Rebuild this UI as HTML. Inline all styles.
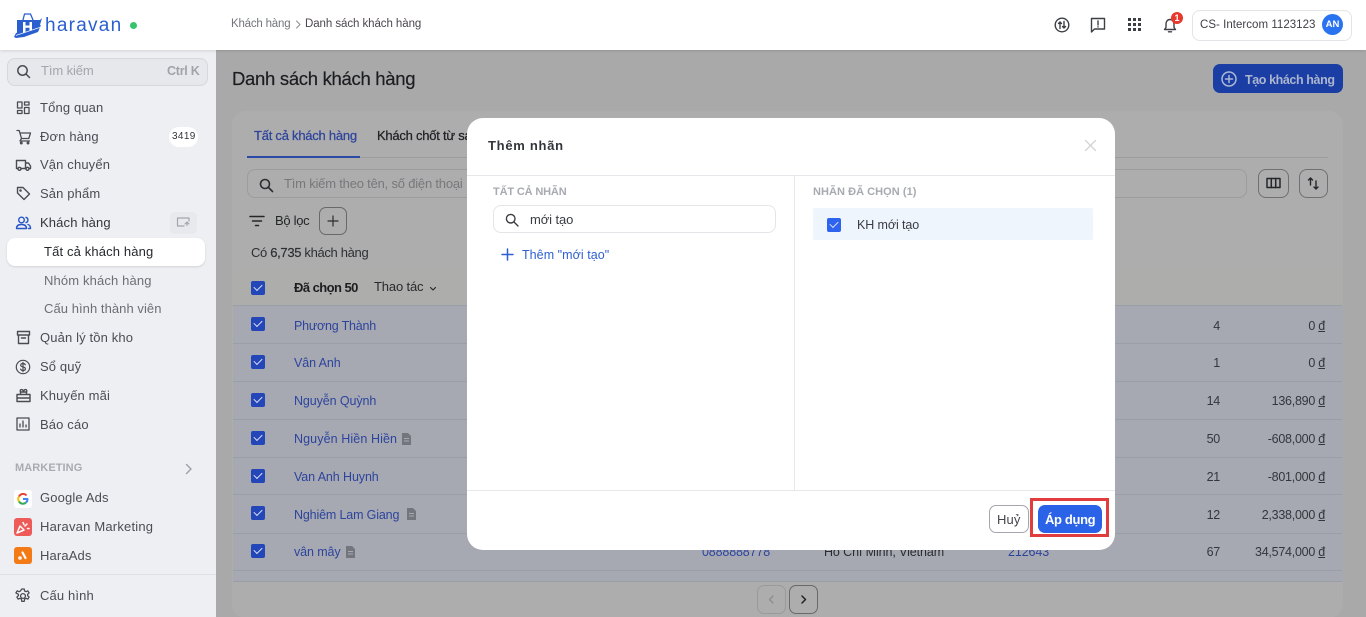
<!DOCTYPE html>
<html lang="vi"><head><meta charset="utf-8"><title>Danh sách khách hàng</title>
<style>
*{box-sizing:border-box}
html,body{margin:0;padding:0;width:1366px;height:617px;overflow:hidden;background:#fff}
body{position:relative;font-family:"Liberation Sans",sans-serif;font-size:13px;color:#3c4048}
.a,.t{position:absolute}
.t{white-space:nowrap;line-height:18px;letter-spacing:.14px}
svg{position:absolute;fill:none;stroke:currentColor;stroke-width:1.5;stroke-linecap:round;stroke-linejoin:round}
.cb{position:absolute;left:251px;width:14px;height:14px;background:#2346b8;border-radius:2px}
.cb:after{content:"";position:absolute;left:3px;top:2.6px;width:7px;height:4px;border-left:1.6px solid #d8dcec;border-bottom:1.6px solid #d8dcec;transform:rotate(-45deg)}
.n{color:#2d449c;font-size:12.5px;letter-spacing:-.1px}
.l{position:absolute;left:233px;width:1109px;height:1px;background:#9a9ea6}
.s{color:#4a4d55}
.num{color:#33363c;text-align:right;font-size:12.5px;letter-spacing:-.25px}
</style></head><body>

<!-- content area -->
<div class="a" style="left:216px;top:50px;width:1150px;height:567px;background:#a9a9aa"></div>
<div class="a" style="left:232px;top:111px;width:1111px;height:507px;background:#adadad;border-radius:14px"></div>
<div class="t" style="left:232px;top:67px;font-size:18.5px;line-height:24px;color:#1c1d20;letter-spacing:-.3px;-webkit-text-stroke:.2px #1c1d20">Danh sách khách hàng</div>

<div class="a" style="left:1213px;top:64px;width:130px;height:29px;background:#1a3ea3;border-radius:7px"></div>
<svg style="left:1221px;top:71px;color:#adb8d6" width="16" height="16" viewBox="0 0 16 16"><circle cx="8" cy="8" r="7"/><path d="M8 4.5v7M4.500 8h7"/></svg>
<div class="t" style="left:1245px;top:71px;color:#adb6cf;font-size:12.5px;font-weight:700;letter-spacing:-.4px">Tạo khách hàng</div>

<div class="t" style="left:254px;top:127px;color:#2d449c;letter-spacing:-.24px;-webkit-text-stroke:.25px #2d449c">Tất cả khách hàng</div>
<div class="t" style="left:377px;top:127px;color:#1f2024;letter-spacing:-.24px;-webkit-text-stroke:.25px #1f2024">Khách chốt từ sa</div>
<div class="a" style="left:247px;top:157px;width:1081px;height:1px;background:#9c9c9d"></div>
<div class="a" style="left:247px;top:156px;width:113px;height:2px;background:#2a4aa6"></div>

<div class="a" style="left:247px;top:169px;width:1000px;height:29px;border:1px solid #9c9c9e;border-radius:8px"></div>
<svg style="left:259px;top:178px;color:#2c2d30;stroke-width:1.6" width="15" height="15" viewBox="0 0 15 15"><circle cx="6" cy="6" r="4.5"/><path d="M9.5 9.500l4 4"/></svg>
<div class="t" style="left:284px;top:175px;color:#77787b;letter-spacing:-.2px">Tìm kiếm theo tên, số điện thoại</div>
<div class="a" style="left:1258px;top:169px;width:31px;height:29px;border:1px solid #6f7072;border-radius:8px"></div>
<svg style="left:1266px;top:176px;color:#25262a;stroke-width:1.5" width="15" height="14" viewBox="0 0 15 14"><rect x="1" y="2.500" width="13" height="9"/><path d="M5.300 2.500v9M9.700 2.500v9"/></svg>
<div class="a" style="left:1299px;top:169px;width:29px;height:29px;border:1px solid #6f7072;border-radius:8px"></div>
<svg style="left:1306px;top:176px;color:#25262a;stroke-width:1.4" width="15" height="15" viewBox="0 0 15 15"><path d="M4.500 9V2M2.500 4l2-2 2 2M10 5v8M8 11l2 2 2-2"/></svg>

<svg style="left:249px;top:214px;color:#25262a;stroke-width:1.5" width="16" height="14" viewBox="0 0 16 14"><path d="M1 2.500h14M3.500 7h9M6.500 11.500h3"/></svg>
<div class="t" style="left:275px;top:212px;color:#232427;letter-spacing:-.3px">Bộ lọc</div>
<div class="a" style="left:319px;top:207px;width:28px;height:28px;border:1px solid #68696c;border-radius:7px"></div>
<svg style="left:327px;top:215px;color:#2c2d30;stroke-width:1.200" width="12" height="12" viewBox="0 0 12 12"><path d="M6 1v10M1 6h10"/></svg>
<div class="t" style="left:251px;top:244px;color:#2e2f33;letter-spacing:-.33px">Có <span style="-webkit-text-stroke:.2px">6,735</span> khách hàng</div>

<!-- table -->
<div class="a" style="left:233px;top:269px;width:1110px;height:37px;background:#adadab"></div>
<div class="a" style="left:233px;top:306px;width:1110px;height:276px;background:#a6a9b2"></div>
<div class="l" style="top:305px"></div><div class="l" style="top:343px"></div><div class="l" style="top:381px"></div><div class="l" style="top:419px"></div><div class="l" style="top:457px"></div><div class="l" style="top:494px"></div><div class="l" style="top:533px"></div><div class="l" style="top:570px"></div><div class="l" style="top:581px"></div>

<div class="cb" style="top:281px"></div>
<div class="t" style="left:294px;top:279px;color:#1c1d20;font-weight:700;letter-spacing:-.55px">Đã chọn 50</div>
<div class="t" style="left:374px;top:278px;color:#292a2e;letter-spacing:-.15px">Thao tác</div>
<svg style="left:429px;top:286px;color:#292a2e;stroke-width:1.2" width="8" height="6" viewBox="0 0 8 6"><path d="M1.500 1.500L4 4l2.500-2.500"/></svg>

<div class="cb" style="top:317px"></div><div class="t n" style="left:294px;top:317px;letter-spacing:-.2px">Phương Thành</div>
<div class="cb" style="top:355px"></div><div class="t n" style="left:294px;top:354px">Vân Anh</div>
<div class="cb" style="top:393px"></div><div class="t n" style="left:294px;top:392px">Nguyễn Quỳnh</div>
<div class="cb" style="top:431px"></div><div class="t n" style="left:294px;top:430px;letter-spacing:.1px">Nguyễn Hiền Hiền</div>
<div class="cb" style="top:469px"></div><div class="t n" style="left:294px;top:468px">Van Anh Huynh</div>
<div class="cb" style="top:506px"></div><div class="t n" style="left:294px;top:506px;letter-spacing:-.15px">Nghiêm Lam Giang</div>
<div class="cb" style="top:544px"></div><div class="t n" style="left:294px;top:543px">vân mây</div>
<svg style="left:401px;top:433px;fill:#74767d;stroke:none" width="11" height="12" viewBox="0 0 11 12"><path d="M1 0h6l3 3v9H1zM3 5v1h5V5zM3 7.500v1h5v-1z" fill-rule="evenodd"/></svg>
<svg style="left:406px;top:508px;fill:#74767d;stroke:none" width="11" height="12" viewBox="0 0 11 12"><path d="M1 0h6l3 3v9H1zM3 5v1h5V5zM3 7.500v1h5v-1z" fill-rule="evenodd"/></svg>
<svg style="left:345px;top:546px;fill:#74767d;stroke:none" width="11" height="12" viewBox="0 0 11 12"><path d="M1 0h6l3 3v9H1zM3 5v1h5V5zM3 7.500v1h5v-1z" fill-rule="evenodd"/></svg>

<div class="t n" style="left:702px;top:543px;letter-spacing:-.15px">0888888778</div>
<div class="t" style="left:824px;top:543px;color:#2b2c30;font-size:12.5px;letter-spacing:-.1px">Hồ Chí Minh, Vietnam</div>
<div class="t n" style="left:1008px;top:543px">212643</div>

<div class="t num" style="right:146px;top:317px">4</div><div class="t num" style="right:41px;top:317px">0 <u>đ</u></div>
<div class="t num" style="right:146px;top:354px">1</div><div class="t num" style="right:41px;top:354px">0 <u>đ</u></div>
<div class="t num" style="right:146px;top:392px">14</div><div class="t num" style="right:41px;top:392px">136,890 <u>đ</u></div>
<div class="t num" style="right:146px;top:430px">50</div><div class="t num" style="right:41px;top:430px">-608,000 <u>đ</u></div>
<div class="t num" style="right:146px;top:468px">21</div><div class="t num" style="right:41px;top:468px">-801,000 <u>đ</u></div>
<div class="t num" style="right:146px;top:506px">12</div><div class="t num" style="right:41px;top:506px">2,338,000 <u>đ</u></div>
<div class="t num" style="right:146px;top:543px">67</div><div class="t num" style="right:41px;top:543px">34,574,000 <u>đ</u></div>

<div class="a" style="left:757px;top:585px;width:29px;height:29px;border:1px solid #9a9a9b;border-radius:7px"></div>
<svg style="left:767px;top:595px;color:#8d8d8e;stroke-width:1.300" width="9" height="9" viewBox="0 0 9 9"><path d="M6 1L2.500 4.500 6 8"/></svg>
<div class="a" style="left:789px;top:585px;width:29px;height:29px;border:1px solid #68696c;border-radius:7px"></div>
<svg style="left:799px;top:595px;color:#222327;stroke-width:1.500" width="9" height="9" viewBox="0 0 9 9"><path d="M3 1l3.500 3.500L3 8"/></svg>

<!-- sidebar -->
<div class="a" style="left:0;top:50px;width:216px;height:567px;background:#edeff3"></div>
<div class="a" style="left:7px;top:58px;width:201px;height:28px;background:#e6e8ec;border:1px solid #d5d7dc;border-radius:8px"></div>
<svg style="left:16px;top:64px;color:#4a4c52;stroke-width:1.5" width="15" height="15" viewBox="0 0 15 15"><circle cx="6.500" cy="6.500" r="4.700"/><path d="M10 10l3.500 3.500"/></svg>
<div class="t" style="left:41px;top:62px;color:#a2a5ac;letter-spacing:-.1px">Tìm kiếm</div>
<div class="t" style="left:167px;top:62px;color:#a0a3aa;font-size:12.5px;font-weight:700;letter-spacing:-.25px">Ctrl K</div>

<svg style="left:16px;top:101px;color:#4a4c52;stroke-width:1.3" width="15" height="14" viewBox="0 0 15 14"><rect x="1.500" y="1" width="4.500" height="6"/><rect x="8.500" y="1" width="4.500" height="3"/><rect x="8.500" y="6.500" width="4.500" height="6"/><rect x="1.500" y="9.500" width="4.500" height="3"/></svg>
<div class="t s" style="left:40px;top:99px">Tổng quan</div>
<svg style="left:16px;top:129px;color:#4a4c52;stroke-width:1.3" width="16" height="16" viewBox="0 0 16 16"><path d="M1 1.500h2.200l2.300 8h7.300l1.700-5.500H4M5.500 9.500L4 12h9.500"/><circle cx="5.300" cy="14" r=".8"/><circle cx="12" cy="14" r=".8"/></svg>
<div class="t s" style="left:40px;top:128px">Đơn hàng</div>
<div class="a" style="left:169px;top:127px;width:29px;height:20px;background:#fff;border-radius:10px"></div>
<div class="t" style="left:172px;top:128px;font-size:10px;color:#33353a;letter-spacing:.35px">3419</div>
<svg style="left:15px;top:158px;color:#4a4c52;stroke-width:1.400" width="17" height="14" viewBox="0 0 17 14"><path d="M3 10.500H1.500v-8h9v8H6M10.500 5h3l2 3v2.500h-1.500M10.500 10.500h.5"/><circle cx="4.500" cy="10.800" r="1.500"/><circle cx="12.500" cy="10.800" r="1.500"/></svg>
<div class="t s" style="left:40px;top:156px">Vận chuyển</div>
<svg style="left:16px;top:186px;color:#4a4c52;stroke-width:1.400" width="15" height="15" viewBox="0 0 15 15"><path d="M1.500 1.500h5.500l6.500 6.500-5.500 5.500L1.500 7z"/><circle cx="4.500" cy="4.500" r=".6"/></svg>
<div class="t s" style="left:40px;top:185px">Sản phẩm</div>
<svg style="left:15px;top:216px;color:#2a56c6;stroke-width:1.400" width="17" height="14" viewBox="0 0 17 14"><circle cx="6.500" cy="4" r="2.800"/><path d="M1.500 12.500c0-2.700 2-4 5-4s5 1.300 5 4zM11 1.500c2.500.3 2.500 4.700 0 5M13 8.500c1.600.4 2.500 1.800 2.500 4h-2"/></svg>
<div class="t" style="left:40px;top:214px;color:#33353a">Khách hàng</div>
<div class="a" style="left:170px;top:212px;width:27px;height:22px;background:#e7e9ed;border-radius:5px"></div>
<svg style="left:176px;top:217px;color:#a3a6ad;stroke-width:1.200" width="15" height="11" viewBox="0 0 15 11"><path d="M13 4V1H1.500v8H8M9 7l2-2 2 2M11 5v3.500" /></svg>
<div class="a" style="left:7px;top:238px;width:198px;height:28px;background:#fff;border-radius:8px;box-shadow:0 1px 2px rgba(0,0,0,.12)"></div>
<div class="t" style="left:44px;top:243px;color:#27282c">Tất cả khách hàng</div>
<div class="t" style="left:44px;top:272px;color:#6c6f75">Nhóm khách hàng</div>
<div class="t" style="left:44px;top:300px;color:#6c6f75;letter-spacing:.06px">Cấu hình thành viên</div>
<svg style="left:16px;top:330px;color:#4a4c52;stroke-width:1.400" width="15" height="15" viewBox="0 0 15 15"><path d="M1.500 1.500h12v3.500h-12zM2.500 5v8.500h10V5M5.500 8h4"/></svg>
<div class="t s" style="left:40px;top:329px">Quản lý tồn kho</div>
<svg style="left:15px;top:359px;color:#4a4c52;stroke-width:1.200" width="16" height="16" viewBox="0 0 16 16"><circle cx="8" cy="8" r="6.700"/><path d="M10.300 5.800C10 4.900 9 4.500 8 4.500c-1.300 0-2.300.7-2.300 1.800 0 2.400 4.700 1 4.700 3.400 0 1.100-1 1.800-2.400 1.800-1.100 0-2.100-.5-2.400-1.400M8 3.300v9.400"/></svg>
<div class="t s" style="left:40px;top:358px">Sổ quỹ</div>
<svg style="left:16px;top:388px;color:#4a4c52;stroke-width:1.400" width="15" height="15" viewBox="0 0 15 15"><path d="M1 6.500h13v7H1zM1 10h13M4.500 6.500V4M10.500 6.500V4M4.500 4c-1.500-3 3-3.500 3 0 0-3.500 4.500-3 3 0z"/></svg>
<div class="t s" style="left:40px;top:387px">Khuyến mãi</div>
<svg style="left:16px;top:417px;color:#4a4c52;stroke-width:1.300" width="14" height="14" viewBox="0 0 14 14"><rect x="1" y="1" width="12" height="12"/><path d="M4 10V7M7 10V4M10 10V8"/></svg>
<div class="t s" style="left:40px;top:416px">Báo cáo</div>

<div class="t" style="left:15px;top:459px;font-size:11px;font-weight:700;color:#a8abb2;letter-spacing:.08px">MARKETING</div>
<svg style="left:184px;top:463px;color:#a0a3aa" width="9" height="12" viewBox="0 0 9 12"><path d="M2.500 1.500L7 6l-4.500 4.500"/></svg>

<div class="a" style="left:14px;top:490px;width:18px;height:18px;background:#fff;border-radius:3px"></div>
<svg style="left:17px;top:493px;stroke-width:2;stroke-linecap:butt" width="12" height="12" viewBox="0 0 12 12"><path stroke="#ea4335" d="M2 3.500A4.500 4.500 0 0 1 9.500 2.500"/><path stroke="#fbbc05" d="M2 3.500a4.500 4.500 0 0 0 0 5"/><path stroke="#34a853" d="M2 8.500A4.500 4.500 0 0 0 9 9.500"/><path stroke="#4285f4" d="M9 9.500A4.500 4.500 0 0 0 10.500 6H6"/></svg>
<div class="a" style="left:14px;top:518px;width:18px;height:18px;background:#ee5a58;border-radius:3px"></div>
<svg style="left:15px;top:519px;color:#fff;stroke-width:1.500" width="16" height="16" viewBox="0 0 16 16"><path d="M2 14l3-7 4 4zM8 3.500l1 2M12 5l-2 2M12.500 9.500h1.500"/></svg>
<div class="a" style="left:14px;top:547px;width:18px;height:17px;background:#f47a16;border-radius:3px"></div>
<svg style="left:15px;top:548px;color:#fff;stroke-width:2.200" width="16" height="15" viewBox="0 0 16 15"><path d="M7.500 4.500l3 5.500"/><circle cx="5" cy="10" r=".7"/></svg>
<div class="t s" style="left:40px;top:489px">Google Ads</div>
<div class="t s" style="left:40px;top:518px;letter-spacing:.2px">Haravan Marketing</div>
<div class="t s" style="left:40px;top:547px">HaraAds</div>
<div class="a" style="left:0;top:574px;width:216px;height:1px;background:#dfe1e6"></div>
<svg style="left:15px;top:588px;color:#4a4c52;stroke-width:1.300" width="16" height="16" viewBox="0 0 16 16"><circle cx="8" cy="8" r="2.400"/><path d="M6.800 1h2.400l.4 2 1.400.7 1.900-.8 1.200 2-1.500 1.400v1.400l1.500 1.400-1.200 2-1.900-.8-1.400.7-.4 2.400H6.800l-.4-2.400-1.400-.7-1.900.8-1.200-2 1.500-1.400V6.300L.9 4.900l1.200-2 1.900.8 1.400-.7z"/></svg>
<div class="t s" style="left:40px;top:587px">Cấu hình</div>

<!-- header -->
<div class="a" style="left:0;top:0;width:1366px;height:50px;background:#fff;box-shadow:0 1px 3px rgba(0,0,0,.12)"></div>
<svg style="left:14px;top:13px;stroke:none;fill:#2a5fd0" width="28" height="26" viewBox="0 0 28 26"><path d="M3 7h23l2-2-2 7-2 4-21 6z"/><path d="M0 24l2-4 25-8-3 7-14 5-8 1z"/><path fill="none" stroke="#2a5fd0" stroke-width="1.300" d="M9 7l1.500-6h6L19 7"/><path fill="#fff" d="M9 9h2.500v3.500h4V9H18v8l-2.500.8v-3h-4v4.200L9 19.800z"/><path fill="#fff" d="M2 22l24-8v.8L2 22.800z"/></svg>
<div class="t" style="left:45px;top:14px;font-size:19px;line-height:24px;color:#2a5fd0;letter-spacing:1.250px">haravan</div>
<div class="a" style="left:130px;top:22px;width:7px;height:7px;background:#34c56c;border-radius:50%"></div>
<div class="t" style="left:231px;top:15px;font-size:11.500px;color:#73767c;letter-spacing:-.2px">Khách hàng</div>
<svg style="left:295px;top:20px;color:#8a8d93;stroke-width:1" width="7" height="9" viewBox="0 0 7 9"><path d="M1.500 1l3.500 3.500L1.500 8"/></svg>
<div class="t" style="left:305px;top:15px;font-size:11.500px;color:#4b4650;letter-spacing:-.07px">Danh sách khách hàng</div>

<svg style="left:1054px;top:17px;color:#3c3f45;stroke-width:1.400" width="16" height="16" viewBox="0 0 16 16"><circle cx="8" cy="8" r="6.800"/><path d="M6 11.500V5M4.500 6.500L6 5l1.500 1.500M10 4.500V11M8.500 9.500L10 11l1.500-1.500"/></svg>
<svg style="left:1090px;top:17px;color:#3c3f45;stroke-width:1.400" width="16" height="16" viewBox="0 0 16 16"><path d="M1.500 1.500h13v10.500H4.500l-3 3zM8 4v4M8 9.800v.2"/></svg>
<svg style="left:1128px;top:18px;fill:#3c3f45;stroke:none" width="13" height="13" viewBox="0 0 13 13"><path d="M0 0h3v3H0zM5 0h3v3H5zM10 0h3v3h-3zM0 5h3v3H0zM5 5h3v3H5zM10 5h3v3h-3zM0 10h3v3H0zM5 10h3v3H5zM10 10h3v3h-3z"/></svg>
<svg style="left:1163px;top:17px;color:#3c3f45;stroke-width:1.400" width="14" height="16" viewBox="0 0 14 16"><path d="M1.500 12.500h11l-1.500-2V7c0-2.500-1.500-4.500-4-4.500S3 4.500 3 7v3.500zM5.500 14.800h3"/></svg>
<div class="a" style="left:1171px;top:12px;width:12px;height:12px;background:#e8392c;border-radius:50%;color:#fff;font-size:9px;font-weight:700;line-height:12px;text-align:center">1</div>
<div class="a" style="left:1192px;top:10px;width:160px;height:31px;background:#fff;border:1px solid #e2e4e8;border-radius:8px"></div>
<div class="t" style="left:1200px;top:16px;font-size:11.500px;color:#3f4147;letter-spacing:.03px">CS- Intercom 1123123</div>
<div class="a" style="left:1322px;top:14px;width:21px;height:21px;background:#2a73f0;border-radius:50%;color:#fff;font-size:9.500px;font-weight:700;line-height:21px;text-align:center">AN</div>

<!-- modal -->
<div class="a" style="left:467px;top:118px;width:648px;height:432px;background:#fff;border-radius:16px"></div>
<div class="t" style="left:488px;top:137px;font-weight:700;color:#33353a;letter-spacing:.72px">Thêm nhãn</div>
<svg style="left:1084px;top:139px;color:#d2d4d8;stroke-width:1.300" width="13" height="13" viewBox="0 0 13 13"><path d="M1.500 1.500l10 10M11.500 1.500l-10 10"/></svg>
<div class="a" style="left:467px;top:175px;width:648px;height:1px;background:#e6e7ea"></div>
<div class="a" style="left:794px;top:175px;width:1px;height:315px;background:#e6e7ea"></div>
<div class="a" style="left:467px;top:490px;width:648px;height:1px;background:#e6e7ea"></div>

<div class="t" style="left:493px;top:183px;font-size:11px;font-weight:700;color:#a7aab1;letter-spacing:-.15px">TẤT CẢ NHÃN</div>
<div class="a" style="left:493px;top:205px;width:283px;height:28px;border:1px solid #e3e5e9;border-radius:8px"></div>
<svg style="left:505px;top:213px;color:#3a3c42;stroke-width:1.400" width="14" height="14" viewBox="0 0 14 14"><circle cx="5.700" cy="5.700" r="4.300"/><path d="M9 9l4 4"/></svg>
<div class="t" style="left:530px;top:211px;color:#3a3c42;letter-spacing:-.1px">mới tạo</div>
<svg style="left:501px;top:248px;color:#2e5fd0;stroke-width:1.500" width="13" height="13" viewBox="0 0 13 13"><path d="M6.500 1v11M1 6.500h11"/></svg>
<div class="t" style="left:522px;top:246px;font-size:12.500px;color:#2e5fd0;letter-spacing:.05px">Thêm "mới tạo"</div>

<div class="t" style="left:813px;top:183px;font-size:11px;font-weight:700;color:#a7aab1;letter-spacing:.05px">NHÃN ĐÃ CHỌN (1)</div>
<div class="a" style="left:813px;top:208px;width:280px;height:32px;background:#eff5fd;border-radius:2px"></div>
<div class="cb" style="left:827px;top:218px;background:#2d63ee"></div>
<div class="t" style="left:857px;top:216px;font-size:12.500px;color:#3a3c42;letter-spacing:-.1px">KH mới tạo</div>

<div class="a" style="left:989px;top:505px;width:40px;height:28px;background:#fff;border:1px solid #a5a7ac;border-radius:7px"></div>
<div class="t" style="left:997px;top:511px;color:#44464c;letter-spacing:.1px">Huỷ</div>
<div class="a" style="left:1038px;top:505px;width:64px;height:28px;background:#2a63e8;border-radius:7px"></div>
<div class="t" style="left:1045px;top:511px;color:#fff;font-weight:700;letter-spacing:-.35px">Áp dụng</div>
<div class="a" style="left:1030px;top:498px;width:79px;height:39px;border:3px solid #e03e3e"></div>

</body></html>
